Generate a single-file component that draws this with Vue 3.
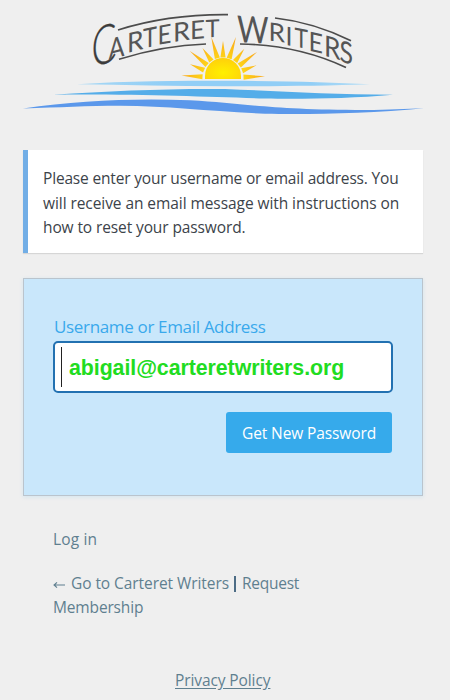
<script setup>
import { ref } from 'vue'

const email = ref('abigail@carteretwriters.org')

// Each wordmark letter: left edge, baseline, drawn width, font size, slope
const letters = [
  { c: 'C', x: 91.5, y: 68.5, w: 25, s: 54, k: -20, thin: true },
  { c: 'A', x: 108.5, y: 60, w: 16, s: 29, k: -15 },
  { c: 'R', x: 127, y: 53, w: 16.5, s: 27, k: -14 },
  { c: 'T', x: 143, y: 48.5, w: 14, s: 27, k: -12 },
  { c: 'E', x: 157.5, y: 45, w: 14, s: 26.5, k: -10 },
  { c: 'R', x: 173, y: 42, w: 17, s: 26, k: -8 },
  { c: 'E', x: 190, y: 39.5, w: 15, s: 25.5, k: -5 },
  { c: 'T', x: 205.5, y: 37.5, w: 14, s: 24.5, k: -3 },
  { c: 'W', x: 237, y: 42, w: 31.5, s: 37, k: 3 },
  { c: 'R', x: 268.5, y: 40.5, w: 16.5, s: 25.5, k: 7 },
  { c: 'I', x: 285.5, y: 45, w: 7, s: 26, k: 9 },
  { c: 'T', x: 294.5, y: 46.5, w: 13.5, s: 26.5, k: 11 },
  { c: 'E', x: 308.5, y: 50.5, w: 14.5, s: 27, k: 13 },
  { c: 'R', x: 324, y: 55.5, w: 16.5, s: 29, k: 16 },
  { c: 'S', x: 339.5, y: 61, w: 13.5, s: 30, k: 18 },
]

const tips = [
  [181.5, 75.5], [190, 64.3], [189.8, 51], [202.5, 48], [211.3, 37],
  [223, 41], [235.9, 37], [244.3, 48.7], [257, 52], [256.5, 65.3], [265, 76.3],
]
const rays = tips.map(([x, y]) => {
  const dx = x - 223
  const dy = y - 78
  const d = Math.hypot(dx, dy)
  const bx = 223 + (dx / d) * 20.5
  const by = 78 + (dy / d) * 20.5
  const ox = (-dy / d) * 2.6
  const oy = (dx / d) * 2.6
  return `${x},${y} ${bx + ox},${by + oy} ${bx - ox},${by - oy}`
})
</script>

<template>
  <main class="page">
    <svg class="logo" viewBox="0 0 450 125" role="img" aria-label="Carteret Writers">
      <defs>
        <radialGradient id="sun" cx="50%" cy="70%" r="65%">
          <stop offset="0" stop-color="#fff000" />
          <stop offset="1" stop-color="#ffd20a" />
        </radialGradient>
        <radialGradient id="ray" gradientUnits="userSpaceOnUse" cx="223" cy="79" r="43">
          <stop offset="0.4" stop-color="#ffdc16" />
          <stop offset="1" stop-color="#faa61c" />
        </radialGradient>
        <linearGradient id="w1" x2="1"><stop offset="0" stop-color="#a8d8f4" /><stop offset=".3" stop-color="#91cef6" /><stop offset=".8" stop-color="#91cef6" /><stop offset="1" stop-color="#b9dff5" /></linearGradient>
      </defs>
      <g class="arc">
        <path d="M118 30 C153 19 187 14.3 228 14.7" />
        <path d="M119 59.3 C147 50.5 175 45 206 44" />
        <path d="M275 18 C302 21 327 29 351 40.7" />
        <path d="M240 44 C279 44.5 313 52 346 67.5" />
      </g>
      <g class="word">
        <text
          v-for="(l, i) in letters"
          :key="i"
          :class="{ thin: l.thin }"
          :font-size="l.s"
          :textLength="l.w"
          lengthAdjust="spacingAndGlyphs"
          :transform="`translate(${l.x} ${l.y}) skewY(${l.k})`"
        >{{ l.c }}</text>
      </g>
      <polygon v-for="r in rays" :key="r" :points="r" fill="url(#ray)" />
      <path d="M205 79 V76 A18 18 0 0 1 241 76 V79Z" fill="url(#sun)" />
      <path d="M77 84.3 C125 81 180 80.8 230 80.8 C285 80.8 335 82.5 370 84.2 C325 85.8 275 86.2 225 86.2 C175 86.2 125 85 77 84.3Z" fill="url(#w1)" />
      <path d="M53 94.7 C110 91 165 88.5 225 89 C277 91 330 94.5 393 94.7 C350 98.5 301 99.2 265 98.5 C205 97 145 94 53 94.7Z" fill="#54ade9" />
      <path d="M23 108.4 C78 101 130 98 190 100.3 C245 103.3 270 110 365 110 C390 109.7 405 109 424 108.2 C370 113.5 310 114.5 265 113.7 C210 111.5 170 106 120 105.8 C87 105.8 60 107.5 23 108.4Z" fill="#5b98eb" />
    </svg>

    <section class="notice">
      <span class="l1">Please enter your username or email address. You</span>
      <span class="l2">will receive an email message with instructions on</span>
      <span class="l3">how to reset your password.</span>
    </section>

    <form class="form" @submit.prevent>
      <label for="user">Username or Email Address</label>
      <div class="field">
        <span class="caret"></span>
        <input id="user" v-model="email" type="text" autocomplete="off" spellcheck="false" />
      </div>
      <button type="submit"><span>Get New Password</span></button>
    </form>

    <nav class="links">
      <a class="login">Log in</a>
      <p><svg class="arrow" viewBox="0 0 12 8"><path d="M12 4 H1 M4 1.3 L1 4 L4 6.7" /></svg><a class="back">Go to Carteret Writers</a><b></b><a class="request">Request</a></p>
      <a class="member">Membership</a>
    </nav>
    <footer><a>Privacy Policy</a></footer>
  </main>
</template>

<style>
body { background: #efefef; }
</style>

<style scoped>
.page {
  box-sizing: border-box;
  width: 450px;
  height: 700px;
  overflow: hidden;
  background: #efefef;
  color: #3c434a;
  font: 15.5px/24.5px "Open Sans", "Noto Sans", sans-serif;
}
.logo { display: block; width: 450px; height: 125px; }
.word { font-family: Lato, sans-serif; font-weight: 400; fill: #555; }
.word .thin { font-weight: 300; fill: #3c3c3c; stroke: #3c3c3c; stroke-width: .3; }
.arc { fill: none; stroke: #4c4c4c; stroke-width: 1.7; }
.notice {
  box-sizing: border-box;
  display: flex;
  flex-direction: column;
  align-items: flex-start;
  width: 400px;
  height: 103px;
  margin: 25px 0 0 23px;
  padding: 16px 0 0 15px;
  border-left: 5px solid #72aee6;
  background: #fff;
  box-shadow: 0 1px 1px rgba(0, 0, 0, .1);
  white-space: nowrap;
}
.form {
  box-sizing: border-box;
  display: flex;
  flex-direction: column;
  width: 400px;
  height: 218px;
  margin: 25px 0 0 23px;
  padding: 35px 30px 0 29px;
  border: 1px solid #bac4cd;
  background: #c9e7fb;
  box-shadow: 0 1px 4px rgba(110, 190, 240, .22);
}
label {
  height: 27px;
  padding-left: 1px;
  color: #39a9ec;
  font-size: 17px;
  line-height: 26px;
  letter-spacing: -.34px;
  white-space: nowrap;
}
.field {
  box-sizing: border-box;
  display: flex;
  align-items: center;
  width: 340px;
  height: 52px;
  flex: none;
  padding-left: 6px;
  border: 2px solid #2271b1;
  border-radius: 5px;
  background: #fff;
}
.caret { width: 1px; height: 40px; background: #222; }
input {
  box-sizing: border-box;
  width: 300px;
  height: 40px;
  margin: 0 0 0 7px;
  padding: 2px 0 0;
  border: 0;
  outline: 0;
  background: transparent;
  color: #21dc21;
  font: bold 21.33px "Liberation Sans", Arial, sans-serif;
  letter-spacing: -.06px;
}
button {
  align-self: flex-end;
  width: 166px;
  height: 41px;
  margin: 19px 0 0;
  padding: 1px 0 0 16px;
  border: 0;
  border-radius: 3px;
  background: #36aaeb;
  color: #fff;
  font: 15.5px/40px "Open Sans", "Noto Sans", sans-serif;
  letter-spacing: -.11px;
  text-align: left;
  white-space: nowrap;
}
.links {
  display: flex;
  flex-direction: column;
  align-items: flex-start;
  height: 93px;
  margin: 31px 0 0 53px;
  color: #5f7f8f;
  line-height: 24px;
  white-space: nowrap;
}
.links p { display: flex; align-items: center; height: 24px; margin: 20px 0 0; }
.arrow { width: 12px; height: 8px; margin: 3px 6px 0 0; fill: none; stroke: #5f7f8f; stroke-width: 1.1; }
.back { width: 159px; letter-spacing: -.07px; }
.links b { width: 2px; height: 16px; margin: 2px 6px 0 4px; background: #4d6c85; }
footer { margin: 48px 0 0 175px; color: #5f7f8f; line-height: 24px; letter-spacing: -.1px; white-space: nowrap; }
footer a { text-decoration: underline; text-underline-offset: 2px; }
.l1 { letter-spacing: -.17px; }
.l2 { letter-spacing: -.07px; }
.l3 { letter-spacing: -.11px; }
.login { letter-spacing: .15px; }
.request { letter-spacing: -.25px; }
.member { letter-spacing: -.15px; }
</style>
